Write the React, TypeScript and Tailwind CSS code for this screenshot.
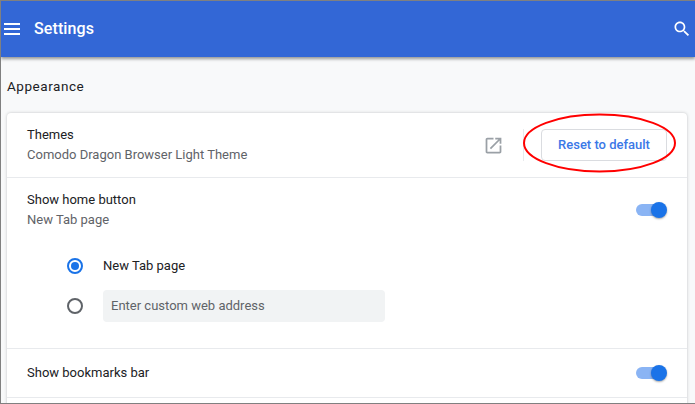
function Toggle() {
  return (
    <div className="relative w-[31px] h-[16px] shrink-0">
      <div className="absolute left-0 top-[2px] w-[28px] h-[12px] rounded-full bg-[#8ab4f4]" />
      <div className="absolute right-0 top-0 w-[16px] h-[16px] rounded-full bg-[#1a73e8] shadow-[0_1px_2px_rgba(0,0,0,0.35)]" />
    </div>
  );
}

export default function App() {
  return (
    <div className="relative w-[695px] h-[404px] overflow-hidden border border-r-0 border-[#808080] bg-[#f8f9fa] font-['Roboto',sans-serif] text-[13px]">
      <header className="flex items-center h-[56px] bg-[#3367d6] text-white shadow-[0_2px_3px_rgba(0,0,0,0.4)]">
        {/* hamburger */}
        <svg width="16" height="12" viewBox="0 0 16 12" fill="currentColor" className="ml-[3px] shrink-0">
          <rect x="0" y="0" width="16" height="2" />
          <rect x="0" y="5" width="16" height="2" />
          <rect x="0" y="10" width="16" height="2" />
        </svg>
        <span className="ml-[14px] text-[16px] font-medium tracking-[0.1px]">Settings</span>
        <svg width="20" height="20" viewBox="0 0 24 24" fill="currentColor" className="ml-auto mr-[3px]">
          <path d="M15.5 14h-.79l-.28-.27C15.41 12.59 16 11.11 16 9.5 16 5.91 13.09 3 9.5 3S3 5.91 3 9.5 5.91 16 9.5 16c1.61 0 3.09-.59 4.23-1.57l.27.28v.79l5 4.99L20.49 19l-4.99-5zm-6 0C7.01 14 5 11.99 5 9.5S7.01 5 9.5 5 14 7.01 14 9.5 11.99 14 9.5 14z" />
        </svg>
      </header>

      <div className="pl-[6px] pr-[8px]">
        <h2 className="pt-[20px] pb-[18px] text-[13.5px] leading-[18px] tracking-[0.55px] text-[#202124]">Appearance</h2>

        <div className="rounded-t-[4px] bg-white shadow-[0_0_3px_rgba(60,64,67,0.3)]">
          <div className="flex items-center h-[65px] pl-[20px] pr-[20px] border-b border-[#e8eaed]">
            <div className="flex-1 leading-[20px]">
              <div className="text-[#202124]">Themes</div>
              <div className="text-[#5f6368]">Comodo Dragon Browser Light Theme</div>
            </div>
            <svg width="21" height="21" viewBox="0 0 24 24" fill="currentColor" className="text-[#9aa0a6] shrink-0">
              <path d="M19 19H5V5h7V3H5c-1.11 0-2 .9-2 2v14c0 1.1.89 2 2 2h14c1.1 0 2-.9 2-2v-7h-2v7zM14 3v2h3.59l-9.83 9.83 1.41 1.41L19 6.41V10h2V3h-7z" />
            </svg>
            <div className="w-px h-[32px] ml-[19px] mr-[17px] bg-[#e8eaed]" />
            <button className="w-[126px] h-[32px] rounded-[4px] border border-[#dadce0] bg-white text-[#3b78e7] font-medium">
              Reset to default
            </button>
          </div>

          <div className="h-[171px] pl-[20px] pr-[20px] border-b border-[#e8eaed]">
            <div className="flex items-center pt-[12px]">
              <div className="flex-1 leading-[20px]">
                <div className="text-[#202124]">Show home button</div>
                <div className="text-[#5f6368]">New Tab page</div>
              </div>
              <Toggle />
            </div>
            <div className="mt-[24px] ml-[40px] flex flex-col">
              <div className="flex items-center h-[24px]">
                <div className="flex items-center justify-center w-[16px] h-[16px] rounded-full border-2 border-[#1a73e8]">
                  <div className="w-[8px] h-[8px] rounded-full bg-[#1a73e8]" />
                </div>
                <span className="ml-[20px] text-[#202124]">New Tab page</span>
              </div>
              <div className="flex items-center mt-[12px]">
                <div className="w-[16px] h-[16px] rounded-full border-2 border-[#5f6368]" />
                <div className="ml-[20px] flex items-center w-[282px] h-[32px] pl-[8px] rounded-[4px] bg-[#f1f3f4] text-[#5f6368]">
                  Enter custom web address
                </div>
              </div>
            </div>
          </div>

          <div className="flex items-center h-[49px] pl-[20px] pr-[20px] border-b border-[#e8eaed]">
            <div className="flex-1 text-[#202124]">Show bookmarks bar</div>
            <Toggle />
          </div>
          <div className="h-[12px]" />
        </div>
      </div>

      {/* red annotation round the button */}
      <svg className="absolute left-[522px] top-[112px]" width="154" height="60" viewBox="0 0 154 60" fill="none">
        <ellipse cx="76.5" cy="30" rx="75.5" ry="28.5" stroke="#ff0000" strokeWidth="2" />
      </svg>
    </div>
  );
}
